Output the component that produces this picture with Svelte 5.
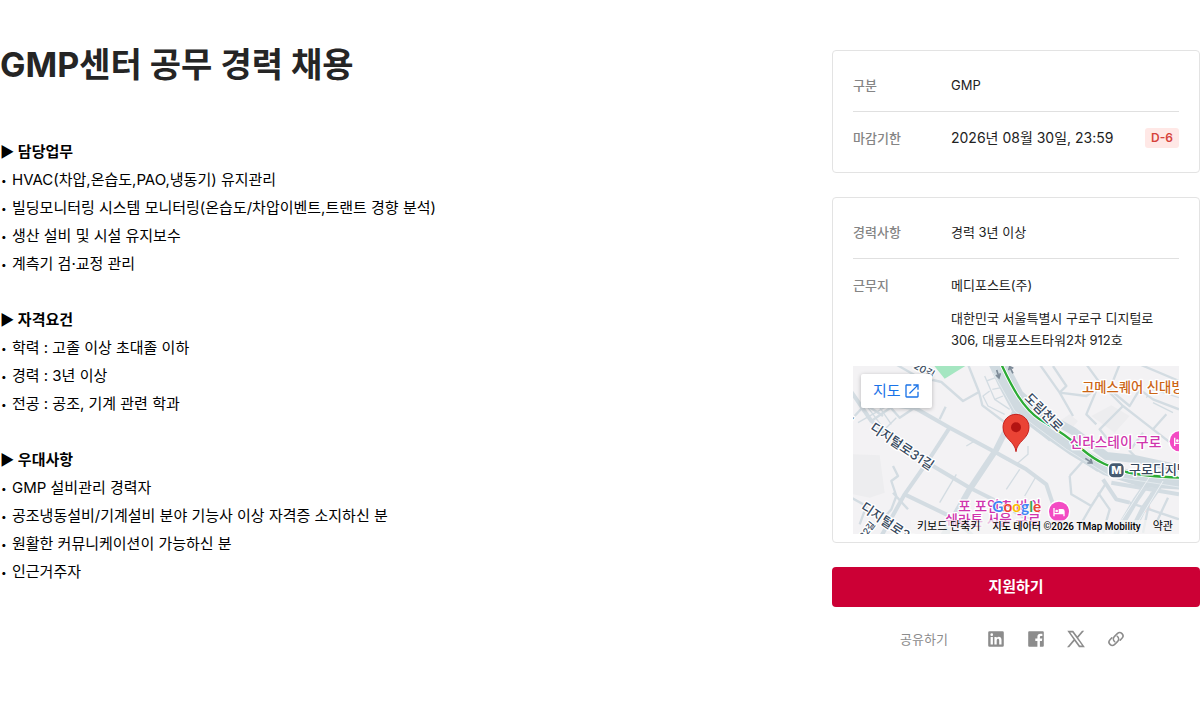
<script>
  const sections = [
    {
      title: '담당업무',
      items: [
        'HVAC(차압,온습도,PAO,냉동기) 유지관리',
        '빌딩모니터링 시스템 모니터링(온습도/차압이벤트,트랜트 경향 분석)',
        '생산 설비 및 시설 유지보수',
        '계측기 검·교정 관리'
      ]
    },
    {
      title: '자격요건',
      items: ['학력 : 고졸 이상 초대졸 이하', '경력 : 3년 이상', '전공 : 공조, 기계 관련 학과']
    },
    {
      title: '우대사항',
      items: [
        'GMP 설비관리 경력자',
        '공조냉동설비/기계설비 분야 기능사 이상 자격증 소지하신 분',
        '원활한 커뮤니케이션이 가능하신 분',
        '인근거주자'
      ]
    }
  ];

  const river = 'M425 -10 L450 45 L495 130 L560 180 L660 250 L760 310 L870 345 L990 352';
  const wide = [
    'M-10 70 L55 165 L150 235 L240 300 L350 365 L440 410 L560 480',
    'M185 125 L290 185 L430 260 L520 310 L580 355 L595 400 L620 470',
    'M290 185 L225 285 L155 385 L85 510',
    'M155 385 L300 455 L360 510',
    'M750 340 L790 400 L830 410 M775 350 L978 385'
  ];
  const avenues = [
    'M490 130 L430 250 L350 370 L270 510',
    'M905 320 L850 400 L785 510',
    'M940 330 L870 430 L830 510'
  ];
  const narrow = [
    'M120 -10 L190 30 L265 48 L330 105 L378 78 L388 118 L470 180',
    'M378 78 L345 -5 M5 150 L60 90 M55 165 L120 120 L190 130 M75 185 L110 225',
    'M30 110 L90 150 M100 110 L140 155 L185 125 M260 160 L278 122',
    'M120 300 L135 330 L115 345 L130 390 L115 430 L90 460 M120 380 L165 430',
    'M-5 395 L40 420 L20 475 M300 455 L285 510',
    'M600 0 L640 60 L620 80 L660 150 M560 -5 L620 80 L700 90 L740 60',
    'M700 -5 L740 50 L810 120 L900 190 L978 250 M740 50 L700 145 L730 175',
    'M800 -5 L770 70 L830 120 L860 70 L900 100 L978 130 M810 120 L740 190 L785 245',
    'M860 -5 L978 45 M870 200 L830 255 L850 275 M900 190 L940 145',
    'M650 330 L690 285 L735 315 M650 330 L655 385 L715 420 L760 350 M715 420 L680 480',
    'M895 380 L870 500 M945 395 L910 470 M830 410 L978 460 M735 380 L770 430 L750 500'
  ];
  const thin = [
    'M395 30 L425 100 L470 130 M410 75 L390 90 L405 120 L455 145 M400 45 L428 35 M418 70 L445 65 M425 100 L450 90',
    'M15 170 L120 110 M45 125 L90 185 M130 155 L75 210 M60 95 L115 175 M260 410 L310 325',
    'M525 240 L525 265 L490 295 L440 270 M500 310 L460 370 M550 330 L515 390 M340 240 L365 225',
    'M880 95 L900 70 L978 95 M900 110 L960 140 M560 200 L590 225'
  ];
</script>

<main class="page">
  <article class="posting">
    <h1>GMP센터 공무 경력 채용</h1>
    {#each sections as section}
      <section>
        <h2>▶ {section.title}</h2>
        {#each section.items as item}
          <p class="item"><span class="bullet">•</span><span>{item}</span></p>
        {/each}
      </section>
    {/each}
  </article>

  <aside class="side">
    <dl class="card">
      <div class="row">
        <dt>구분</dt>
        <dd>GMP</dd>
      </div>
      <div class="row">
        <dt>마감기한</dt>
        <dd class="deadline"><span>2026년 08월 30일, 23:59</span><span class="badge">D-6</span></dd>
      </div>
    </dl>

    <div class="card">
      <dl>
        <div class="row">
          <dt>경력사항</dt>
          <dd>경력 3년 이상</dd>
        </div>
        <div class="row">
          <dt>근무지</dt>
          <dd>
            <p class="company">메디포스트(주)</p>
            <p>대한민국 서울특별시 구로구 디지털로 306, 대륭포스트타워2차 912호</p>
          </dd>
        </div>
      </dl>

      <div class="map">
        <svg class="canvas" viewBox="0 0 978 504" preserveAspectRatio="xMidYMid slice" role="img" aria-label="지도">
          <rect width="978" height="504" fill="#f3f2f4" />
          <path d="M0 265 L80 268 L95 380 L50 395 L0 385Z M620 165 L650 145 L675 165 L650 195Z M715 150 L775 118 L830 150 L785 200Z" fill="#ededef" />
          <path d="M240 -5 H345 L275 38Z" fill="#a5e6c1" />
          <path d="M865 420 L885 412 L895 430 L875 440Z" fill="#fbdede" />
          <g fill="none" stroke="#d3dce2" stroke-linejoin="round">
            {#each thin as d}<path {d} stroke-width="4" />{/each}
            {#each narrow as d}<path {d} stroke-width="7" />{/each}
            {#each wide as d}<path {d} stroke-width="12" />{/each}
            {#each avenues as d}<path {d} stroke-width="18" />{/each}
            <path d={river} stroke="#d0dae0" stroke-width="38" />
            <path d="M450 -10 L500 85 L570 145 L660 195 L760 270 L840 278 L990 310" stroke="#d0dae0" stroke-width="24" />
            <path d="M420 20 L485 135 L640 250 L770 330 L990 365" stroke="#edf1f4" stroke-width="2" />
            <path d="M898 320 L775 510 M930 345 L830 510" stroke="#edf1f4" stroke-width="3" />
          </g>
          <path d="M445 -5 C480 70 510 125 560 160 C620 195 655 220 690 252 C735 290 770 302 820 318 C870 330 930 333 985 335" fill="none" stroke="#fff" stroke-width="12" />
          <path d="M445 -5 C480 70 510 125 560 160 C620 195 655 220 690 252 C735 290 770 302 820 318 C870 330 930 333 985 335" fill="none" stroke="#2dab36" stroke-width="7" />
          <g fill="none" stroke="#7d8b98" stroke-width="5">
            <path d="M431 12 L438 34 M429 27 L438 36 L442 22 M480 22 L470 2 M467 13 L470 2 L481 7 M697 277 L716 290 M703 291 L717 291 L713 278" />
          </g>

          <g class="label road">
            <text transform="translate(180 5) rotate(30)" font-size="30">20길</text>
            <text transform="translate(-12 170) rotate(-50)" font-size="26">길</text>
            <text transform="translate(48 191) rotate(34)" font-size="39">디지털로31길</text>
            <text transform="translate(20 430) rotate(34)" font-size="39">디지털로31길</text>
            <text transform="translate(32 522) rotate(-52)" font-size="27">32길</text>
            <text transform="translate(512 98) rotate(45)" font-size="39">도림천로</text>
            <text x="828" y="324" font-size="39">구로디지털단지</text>
          </g>
          <g class="label food">
            <text x="687" y="79" font-size="40">고메스퀘어 신대방</text>
          </g>
          <g class="label hotel">
            <text x="650" y="244" font-size="41">신라스테이 구로</text>
            <text x="316" y="436" font-size="41">포 포인츠 바이</text>
            <text x="277" y="476" font-size="41">쉐라톤 서울 구로</text>
          </g>

          <g>
            <rect x="766" y="290" width="48" height="46" rx="15" fill="#455a70" stroke="#fff" stroke-width="4" />
            <text x="790" y="325" text-anchor="middle" font-size="33" font-weight="800" fill="#fff">M</text>
          </g>
          {#each [[618, 437], [980, 226]] as [x, y]}
            <g transform={`translate(${x} ${y})`}>
              <circle r="34" fill="#fff" />
              <circle r="30" fill="#f34bc3" />
              <path d="M-17 -11 H-13 V4 H-1 V-8 H10 Q17 -8 17 -1 V14 H13 V8 H-13 V14 H-17Z" fill="#fff" />
              <circle cx="-7" cy="-2" r="4" fill="#fff" />
            </g>
          {/each}

          <path d="M489 257 C486 225 450 219 450 184 C450 162 467 145 489 145 C511 145 528 162 528 184 C528 219 492 225 489 257Z" fill="#ea4335" stroke="#c5221f" stroke-width="3" />
          <circle cx="489" cy="184" r="15" fill="#b31412" />

          <text class="logo" x="418" y="438"><tspan fill="#4285f4">G</tspan><tspan fill="#ea4335">o</tspan><tspan fill="#fbbc04">o</tspan><tspan fill="#4285f4">g</tspan><tspan fill="#34a853">l</tspan><tspan fill="#ea4335">e</tspan></text>
        </svg>
        <a class="open" href="#map">
          지도
          <svg width="16" height="16" viewBox="0 0 24 24" fill="#1a73e8" aria-hidden="true">
            <path d="M20 20H4V4h7V2H4c-1.100 0-2 .9-2 2v16c0 1.100.9 2 2 2h16c1.100 0 2-.9 2-2v-7h-2v7zM14 2v2h4.600L7.500 15.100l1.400 1.400L20 5.400V10h2V2h-8z" />
          </svg>
        </a>
        <div class="credits">
          <button type="button">키보드 단축키</button>
          <span class="source">지도 데이터 ©2026 TMap Mobility</span>
          <a href="#terms">약관</a>
        </div>
      </div>
    </div>

    <button class="apply" type="button">지원하기</button>

    <div class="share">
      <span>공유하기</span>
      <div class="icons">
        <a href="#linkedin" aria-label="LinkedIn">
          <svg viewBox="0 0 20 20"><path fill-rule="evenodd" d="M3.500 2.200h13a1.300 1.300 0 0 1 1.300 1.300v13a1.300 1.300 0 0 1-1.300 1.300h-13a1.300 1.300 0 0 1-1.300-1.300v-13a1.300 1.300 0 0 1 1.300-1.300zM4.600 8v7.400h2.300V8zM5.750 4.300a1.350 1.350 0 1 0 0 2.700 1.350 1.350 0 0 0 0-2.700zM8.400 8v7.400h2.300v-3.900c0-2.200 2.500-2.300 2.500 0v3.900h2.300v-4.500c0-3.600-3.500-3.700-4.800-1.900V8z" /></svg>
        </a>
        <a href="#facebook" aria-label="Facebook">
          <svg viewBox="0 0 20 20"><path d="M3.200 2.200h13.600a1 1 0 0 1 1 1v13.600a1 1 0 0 1-1 1h-2.900v-5.900h2l.4-2.400h-2.400V8.200c0-.8.4-1.200 1.200-1.200h1.300V4.700h-2c-1.900 0-3 1.200-3 3.100v1.700H9.300v2.400h2.100v5.900H3.200a1 1 0 0 1-1-1V3.200a1 1 0 0 1 1-1z" /></svg>
        </a>
        <a href="#x" aria-label="X">
          <svg viewBox="0 0 20 20"><path fill-rule="evenodd" d="M1.300 1.800h5.900l4.100 5.500L16 1.800h2.200l-6 6.900 6.700 9.500H13l-4.500-6.200-5.300 6.200H1l6.500-7.700zM4.300 3.400l9.600 13.200h2.100L6.400 3.400z" /></svg>
        </a>
        <a href="#link" aria-label="링크 복사">
          <svg viewBox="0 0 20 20"><path d="M8.700 12.600a3.300 3.300 0 0 1-.4-5l3-3a3.300 3.300 0 0 1 4.700 4.700l-1.800 1.800M11.300 7.400a3.300 3.300 0 0 1 .4 5l-3 3A3.300 3.300 0 0 1 4 10.700l1.800-1.800" fill="none" stroke="#8c8c8c" stroke-width="1.500" stroke-linecap="round" /></svg>
        </a>
      </div>
    </div>
  </aside>
</main>

<style>
  :global(body) {
    margin: 0;
    background: #fff;
  }
  .page {
    display: grid;
    grid-template-columns: minmax(0, 1fr) 368px;
    gap: 40px;
    align-items: start;
    padding: 40px 0;
    font-family: Inter, 'Noto Sans CJK KR', sans-serif;
    color: #222;
  }
  h1, h2, p, dl, dd {
    margin: 0;
  }
  h1 {
    margin-bottom: 48px;
    font-size: 34px;
    line-height: 50px;
    font-weight: 700;
    color: #252525;
  }
  section {
    margin-bottom: 28px;
    font-size: 15px;
    line-height: 28px;
    color: #000;
  }
  h2 {
    font-size: 15px;
    font-weight: 700;
  }
  .item {
    display: flex;
  }
  .bullet {
    flex: 0 0 12px;
    padding-left: 1px;
    box-sizing: border-box;
    font-size: 10px;
  }
  .side {
    padding-top: 10px;
  }
  .card {
    padding: 8px 20px;
    margin-bottom: 24px;
    border: 1px solid #e3e3e3;
    border-radius: 4px;
    font-size: 13px;
    line-height: 22px;
  }
  .row {
    display: flex;
    padding: 15px 0;
  }
  .row + .row {
    border-top: 1px solid #e0e0e0;
  }
  dt {
    flex: 0 0 98px;
    font-weight: 500;
    color: #858585;
  }
  dd {
    flex: 1;
    min-width: 0;
  }
  .company {
    margin-bottom: 11px;
  }
  .deadline {
    display: flex;
    justify-content: space-between;
    align-items: center;
    font-size: 14px;
  }
  .badge {
    padding: 0 6px;
    border-radius: 3px;
    background: #ffe8e6;
    color: #d6423b;
    font-size: 12px;
    line-height: 20px;
    font-weight: 600;
  }
  .map {
    position: relative;
    overflow: hidden;
  }
  .canvas {
    display: block;
    width: 100%;
    height: 168px;
  }
  .label {
    stroke: #fff;
    stroke-width: 8px;
    stroke-linejoin: round;
    paint-order: stroke;
  }
  .road {
    fill: #35475c;
    font-weight: 500;
  }
  .food {
    fill: #cc6514;
    font-weight: 500;
  }
  .hotel {
    fill: #cf35ad;
    font-weight: 500;
  }
  .logo {
    font-family: Lato, sans-serif;
    font-size: 46px;
    font-weight: 700;
    stroke: #fff;
    stroke-width: 4px;
    paint-order: stroke;
  }
  .open {
    position: absolute;
    top: 8px;
    left: 8px;
    display: flex;
    align-items: center;
    gap: 3px;
    padding: 6px 12px;
    border-radius: 2px;
    background: #fff;
    box-shadow: 0 1px 4px rgba(0, 0, 0, 0.25);
    color: #1a73e8;
    font-size: 15px;
    text-decoration: none;
  }
  .credits {
    position: absolute;
    right: 0;
    bottom: 0;
    display: flex;
    background: rgba(245, 245, 245, 0.7);
    font-family: Roboto, 'Noto Sans CJK KR', sans-serif;
    font-size: 11px;
    line-height: 14px;
    color: #000;
  }
  .credits > * {
    padding: 0 6px;
    border: 0;
    background: none;
    font: inherit;
    color: inherit;
    text-decoration: none;
  }
  .credits > .source {
    font-size: 10px;
    font-weight: 500;
  }
  .apply {
    display: block;
    width: 100%;
    height: 40px;
    padding: 0 0 4px;
    border: 0;
    border-radius: 4px;
    background: #cc0035;
    color: #fff;
    font: inherit;
    font-size: 15px;
    font-weight: 700;
  }
  .share {
    display: flex;
    justify-content: center;
    align-items: center;
    gap: 38px;
    margin-top: 22px;
    padding-right: 6px;
    font-size: 13px;
    line-height: 20px;
    color: #8c8c8c;
  }
  .icons {
    display: flex;
    gap: 20px;
  }
  .icons svg {
    display: block;
    width: 20px;
    height: 20px;
    fill: #8c8c8c;
  }
</style>
